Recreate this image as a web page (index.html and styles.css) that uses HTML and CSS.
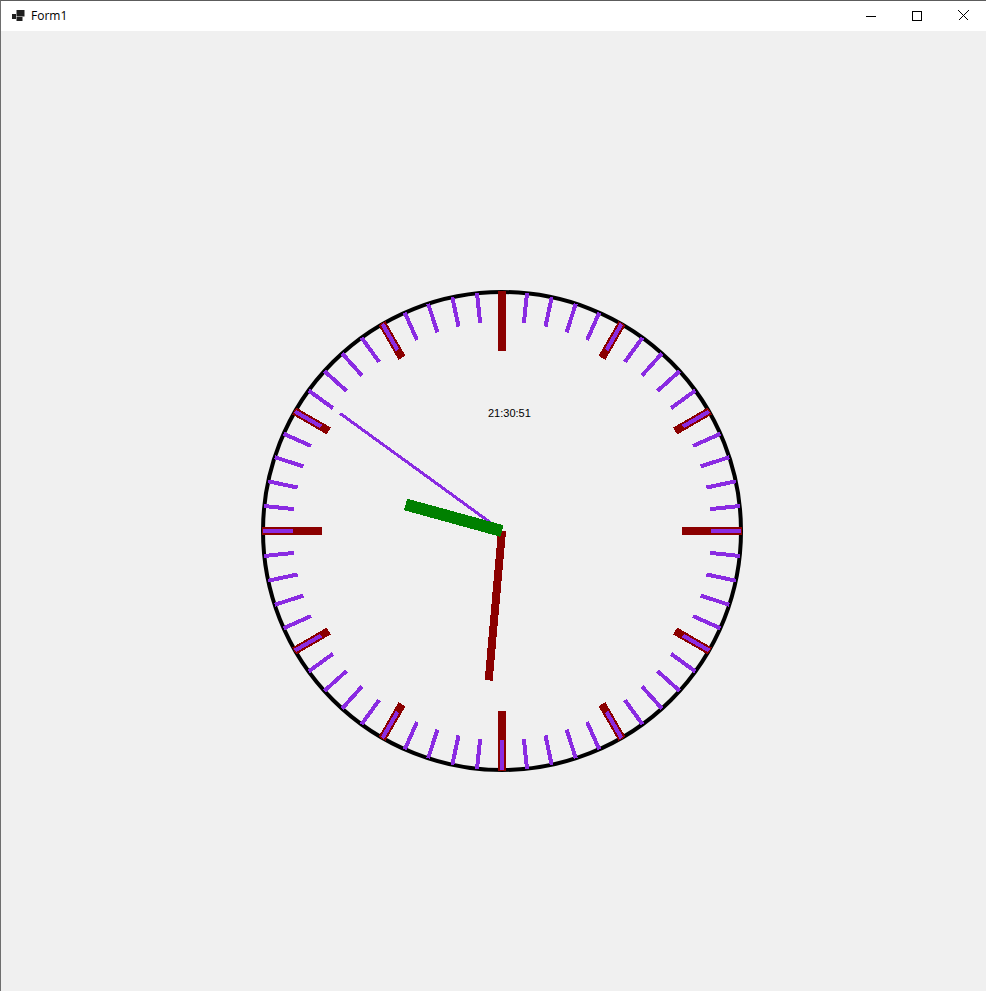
FILE: index.html
```html
<!DOCTYPE html>
<html>
<head>
<meta charset="utf-8">
<title>Form1</title>
<link rel="stylesheet" href="styles.css">
</head>
<body>
<div class="window">
  <div class="titlebar">
    <svg class="app-icon" width="14" height="12" viewBox="0 0 14 12">
      <rect x="0" y="4" width="4" height="5" fill="#1f1f1f"/>
      <rect x="4.5" y="0" width="8" height="6.5" fill="#1f1f1f"/>
      <rect x="4.5" y="7" width="6" height="4" fill="#1f1f1f"/>
    </svg>
    <span class="title">Form1</span>
    <div class="controls">
      <div class="ctrl">
        <svg width="10" height="10" viewBox="0 0 10 10"><line x1="0" y1="5.5" x2="10" y2="5.5" class="glyph"/></svg>
      </div>
      <div class="ctrl">
        <svg width="10" height="10" viewBox="0 0 10 10"><rect x="0.5" y="0.5" width="9" height="9" fill="none" class="glyph"/></svg>
      </div>
      <div class="ctrl">
        <svg width="11" height="11" viewBox="0 0 11 11"><path d="M0.5 0.5 L10.5 10.5 M10.5 0.5 L0.5 10.5" class="glyph"/></svg>
      </div>
    </div>
  </div>
  <div class="client">
    <svg class="clock" width="985" height="960" viewBox="1 31 985 960">
      <circle class="rim" cx="502" cy="531" r="239"/>
      <g class="hour-ticks">
        <line x1="502" y1="291" x2="502" y2="351" transform="rotate(0 502 531)"/>
        <line x1="502" y1="291" x2="502" y2="331" transform="rotate(30 502 531)"/>
        <line x1="502" y1="291" x2="502" y2="331" transform="rotate(60 502 531)"/>
        <line x1="502" y1="291" x2="502" y2="351" transform="rotate(90 502 531)"/>
        <line x1="502" y1="291" x2="502" y2="331" transform="rotate(120 502 531)"/>
        <line x1="502" y1="291" x2="502" y2="331" transform="rotate(150 502 531)"/>
        <line x1="502" y1="291" x2="502" y2="351" transform="rotate(180 502 531)"/>
        <line x1="502" y1="291" x2="502" y2="331" transform="rotate(210 502 531)"/>
        <line x1="502" y1="291" x2="502" y2="331" transform="rotate(240 502 531)"/>
        <line x1="502" y1="291" x2="502" y2="351" transform="rotate(270 502 531)"/>
        <line x1="502" y1="291" x2="502" y2="331" transform="rotate(300 502 531)"/>
        <line x1="502" y1="291" x2="502" y2="331" transform="rotate(330 502 531)"/>
      </g>
      <g class="min-ticks">
        <line x1="502" y1="292" x2="502" y2="322" transform="rotate(6 502 531)"/>
        <line x1="502" y1="292" x2="502" y2="322" transform="rotate(12 502 531)"/>
        <line x1="502" y1="292" x2="502" y2="322" transform="rotate(18 502 531)"/>
        <line x1="502" y1="292" x2="502" y2="322" transform="rotate(24 502 531)"/>
        <line x1="502" y1="292" x2="502" y2="322" transform="rotate(30 502 531)"/>
        <line x1="502" y1="292" x2="502" y2="322" transform="rotate(36 502 531)"/>
        <line x1="502" y1="292" x2="502" y2="322" transform="rotate(42 502 531)"/>
        <line x1="502" y1="292" x2="502" y2="322" transform="rotate(48 502 531)"/>
        <line x1="502" y1="292" x2="502" y2="322" transform="rotate(54 502 531)"/>
        <line x1="502" y1="292" x2="502" y2="322" transform="rotate(60 502 531)"/>
        <line x1="502" y1="292" x2="502" y2="322" transform="rotate(66 502 531)"/>
        <line x1="502" y1="292" x2="502" y2="322" transform="rotate(72 502 531)"/>
        <line x1="502" y1="292" x2="502" y2="322" transform="rotate(78 502 531)"/>
        <line x1="502" y1="292" x2="502" y2="322" transform="rotate(84 502 531)"/>
        <line x1="502" y1="292" x2="502" y2="322" transform="rotate(90 502 531)"/>
        <line x1="502" y1="292" x2="502" y2="322" transform="rotate(96 502 531)"/>
        <line x1="502" y1="292" x2="502" y2="322" transform="rotate(102 502 531)"/>
        <line x1="502" y1="292" x2="502" y2="322" transform="rotate(108 502 531)"/>
        <line x1="502" y1="292" x2="502" y2="322" transform="rotate(114 502 531)"/>
        <line x1="502" y1="292" x2="502" y2="322" transform="rotate(120 502 531)"/>
        <line x1="502" y1="292" x2="502" y2="322" transform="rotate(126 502 531)"/>
        <line x1="502" y1="292" x2="502" y2="322" transform="rotate(132 502 531)"/>
        <line x1="502" y1="292" x2="502" y2="322" transform="rotate(138 502 531)"/>
        <line x1="502" y1="292" x2="502" y2="322" transform="rotate(144 502 531)"/>
        <line x1="502" y1="292" x2="502" y2="322" transform="rotate(150 502 531)"/>
        <line x1="502" y1="292" x2="502" y2="322" transform="rotate(156 502 531)"/>
        <line x1="502" y1="292" x2="502" y2="322" transform="rotate(162 502 531)"/>
        <line x1="502" y1="292" x2="502" y2="322" transform="rotate(168 502 531)"/>
        <line x1="502" y1="292" x2="502" y2="322" transform="rotate(174 502 531)"/>
        <line x1="502" y1="292" x2="502" y2="322" transform="rotate(180 502 531)"/>
        <line x1="502" y1="292" x2="502" y2="322" transform="rotate(186 502 531)"/>
        <line x1="502" y1="292" x2="502" y2="322" transform="rotate(192 502 531)"/>
        <line x1="502" y1="292" x2="502" y2="322" transform="rotate(198 502 531)"/>
        <line x1="502" y1="292" x2="502" y2="322" transform="rotate(204 502 531)"/>
        <line x1="502" y1="292" x2="502" y2="322" transform="rotate(210 502 531)"/>
        <line x1="502" y1="292" x2="502" y2="322" transform="rotate(216 502 531)"/>
        <line x1="502" y1="292" x2="502" y2="322" transform="rotate(222 502 531)"/>
        <line x1="502" y1="292" x2="502" y2="322" transform="rotate(228 502 531)"/>
        <line x1="502" y1="292" x2="502" y2="322" transform="rotate(234 502 531)"/>
        <line x1="502" y1="292" x2="502" y2="322" transform="rotate(240 502 531)"/>
        <line x1="502" y1="292" x2="502" y2="322" transform="rotate(246 502 531)"/>
        <line x1="502" y1="292" x2="502" y2="322" transform="rotate(252 502 531)"/>
        <line x1="502" y1="292" x2="502" y2="322" transform="rotate(258 502 531)"/>
        <line x1="502" y1="292" x2="502" y2="322" transform="rotate(264 502 531)"/>
        <line x1="502" y1="292" x2="502" y2="322" transform="rotate(270 502 531)"/>
        <line x1="502" y1="292" x2="502" y2="322" transform="rotate(276 502 531)"/>
        <line x1="502" y1="292" x2="502" y2="322" transform="rotate(282 502 531)"/>
        <line x1="502" y1="292" x2="502" y2="322" transform="rotate(288 502 531)"/>
        <line x1="502" y1="292" x2="502" y2="322" transform="rotate(294 502 531)"/>
        <line x1="502" y1="292" x2="502" y2="322" transform="rotate(300 502 531)"/>
        <line x1="502" y1="292" x2="502" y2="322" transform="rotate(306 502 531)"/>
        <line x1="502" y1="292" x2="502" y2="322" transform="rotate(312 502 531)"/>
        <line x1="502" y1="292" x2="502" y2="322" transform="rotate(318 502 531)"/>
        <line x1="502" y1="292" x2="502" y2="322" transform="rotate(324 502 531)"/>
        <line x1="502" y1="292" x2="502" y2="322" transform="rotate(330 502 531)"/>
        <line x1="502" y1="292" x2="502" y2="322" transform="rotate(336 502 531)"/>
        <line x1="502" y1="292" x2="502" y2="322" transform="rotate(342 502 531)"/>
        <line x1="502" y1="292" x2="502" y2="322" transform="rotate(348 502 531)"/>
        <line x1="502" y1="292" x2="502" y2="322" transform="rotate(354 502 531)"/>
      </g>
      <text class="digital" x="488" y="417">21:30:51</text>
      <line class="hand-sec" x1="502" y1="531" x2="502" y2="331" transform="rotate(306 502 531)"/>
      <line class="hand-min" x1="502" y1="531" x2="502" y2="381" transform="rotate(185.1 502 531)"/>
      <line class="hand-hour" x1="502" y1="531" x2="502" y2="431" transform="rotate(285.4 502 531)"/>
    </svg>
  </div>
</div>
</body>
</html>
```
FILE: styles.css
```css
html, body {
  margin: 0;
  padding: 0;
  background: #f0f0f0;
}

.window {
  width: 985px;
  height: 990px;
  border-top: 1px solid #5c5c5c;
  border-left: 1px solid #6e6e6e;
  display: flex;
  flex-direction: column;
  overflow: hidden;
}

.titlebar {
  height: 30px;
  background: #ffffff;
  display: flex;
  align-items: center;
  flex: 0 0 auto;
}

.app-icon {
  margin-left: 11px;
  margin-top: -1px;
  display: block;
}

.title {
  margin-left: 5px;
  font-family: "Open Sans", "Liberation Sans", sans-serif;
  font-size: 12px;
  color: #000000;
  margin-top: -1px;
}

.controls {
  margin-left: auto;
  display: flex;
  height: 30px;
}

.ctrl {
  width: 46px;
  height: 30px;
  display: flex;
  align-items: center;
  justify-content: center;
}

.ctrl svg {
  display: block;
  margin-top: -1px;
}

.glyph {
  stroke: #000000;
  stroke-width: 1;
  shape-rendering: crispEdges;
}

.client {
  flex: 1 1 auto;
  background: #f0f0f0;
}

.clock {
  display: block;
  shape-rendering: crispEdges;
}

.rim {
  fill: none;
  stroke: #000000;
  stroke-width: 4;
  shape-rendering: auto;
}

.hour-ticks line {
  stroke: #8b0000;
  stroke-width: 8;
}

.min-ticks line {
  stroke: #8a2be2;
  stroke-width: 4;
}

.digital {
  font-family: "Liberation Sans", Arial, sans-serif;
  font-size: 11px;
  fill: #000000;
}

.hand-sec {
  stroke: #8a2be2;
  stroke-width: 3;
}

.hand-min {
  stroke: #8b0000;
  stroke-width: 8;
}

.hand-hour {
  stroke: #008000;
  stroke-width: 12;
}
```
